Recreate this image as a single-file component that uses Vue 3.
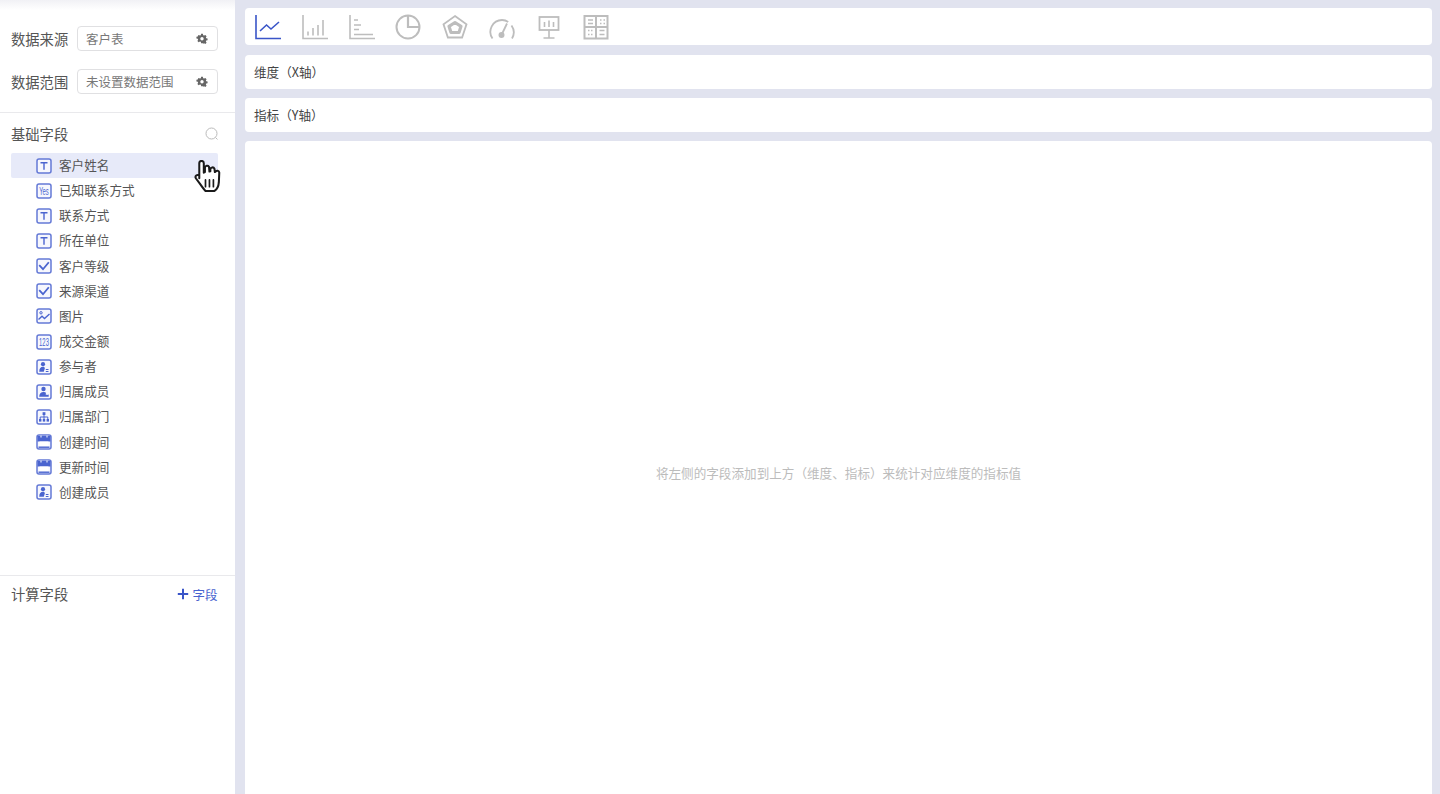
<script setup>
const fields = [
  { name: '客户姓名', icon: 'text', active: true },
  { name: '已知联系方式', icon: 'yes' },
  { name: '联系方式', icon: 'text' },
  { name: '所在单位', icon: 'text' },
  { name: '客户等级', icon: 'check' },
  { name: '来源渠道', icon: 'check' },
  { name: '图片', icon: 'image' },
  { name: '成交金额', icon: 'number' },
  { name: '参与者', icon: 'person' },
  { name: '归属成员', icon: 'member' },
  { name: '归属部门', icon: 'dept' },
  { name: '创建时间', icon: 'date' },
  { name: '更新时间', icon: 'date' },
  { name: '创建成员', icon: 'person' }
]
</script>

<template>
  <div class="page">
    <aside class="side">
      <div class="source">
        <div class="source-row">
          <span class="label">数据来源</span>
          <div class="select">
            <span>客户表</span>
            <svg class="gear" viewBox="0 0 12 12"><path d="M5 .8h2l.3 1.500 1 .5L9.700 2l1.400 1.400-.8 1.400.4 1 1.500.3v1.900l-1.500.3-.4 1 .8 1.400-1.400 1.400-1.400-.8-1 .4L7 11.200H5l-.3-1.500-1-.4-1.400.8L.9 8.700l.8-1.400-.4-1L-.2 6V4.100l1.500-.3.400-1L.9 3.400 2.300 2l1.400.8 1-.5z" transform="translate(.6 .1) scale(.9)" /><circle cx="6" cy="5.700" r="1.700" fill="#fff" /></svg>
          </div>
        </div>
        <div class="source-row">
          <span class="label">数据范围</span>
          <div class="select">
            <span>未设置数据范围</span>
            <svg class="gear" viewBox="0 0 12 12"><path d="M5 .8h2l.3 1.500 1 .5L9.700 2l1.400 1.400-.8 1.400.4 1 1.500.3v1.900l-1.500.3-.4 1 .8 1.400-1.400 1.400-1.400-.8-1 .4L7 11.200H5l-.3-1.500-1-.4-1.400.8L.9 8.700l.8-1.400-.4-1L-.2 6V4.100l1.500-.3.400-1L.9 3.400 2.300 2l1.400.8 1-.5z" transform="translate(.6 .1) scale(.9)" /><circle cx="6" cy="5.700" r="1.700" fill="#fff" /></svg>
          </div>
        </div>
      </div>

      <div class="base">
        <div class="section-head">
          <span class="label">基础字段</span>
          <svg class="search" viewBox="0 0 14 14"><circle cx="6.500" cy="6.500" r="5.500" /><path d="M10.500 10.500l2 2" /></svg>
        </div>
        <ul class="field-list">
          <li v-for="f in fields" :key="f.name" class="field" :class="{ active: f.active }">
            <svg class="field-icon" viewBox="0 0 16 16">
              <rect x="1" y="1" width="14" height="14" rx="2" class="box" />
              <template v-if="f.icon === 'text'">
                <path d="M4.500 4.700h7M8 4.700v7" class="line" />
              </template>
              <template v-else-if="f.icon === 'yes'">
                <text x="0" y="0" text-anchor="middle" class="tiny" transform="translate(8 12) scale(.56 1)">Yes</text>
              </template>
              <template v-else-if="f.icon === 'check'">
                <path d="M3.200 7.200L7 11.200l5.800-7" class="line bold" />
              </template>
              <template v-else-if="f.icon === 'image'">
                <path d="M2.500 11.500L6 8.300l2.500 2.200 5-4.500" class="line" />
                <circle cx="5" cy="4.800" r="1.200" class="line thin" />
              </template>
              <template v-else-if="f.icon === 'number'">
                <text x="0" y="0" text-anchor="middle" class="tiny" transform="translate(8 12) scale(.56 1)">123</text>
              </template>
              <template v-else-if="f.icon === 'person'">
                <circle cx="7" cy="5.200" r="2.100" class="fill" />
                <path d="M3.200 12.800c0-3.200 1.500-5 3.800-5 1.200 0 1.800.6 1.800 1.600l-1 3.400z" class="fill" />
                <path d="M9.800 10.500h2.700M9.800 12.500h2.700" class="line thin" />
              </template>
              <template v-else-if="f.icon === 'member'">
                <circle cx="7.500" cy="5" r="2.200" class="fill" />
                <path d="M3.200 12.800c0-3 1.800-4.800 4.300-4.800 1 0 2 .3 2.600 1l-.6 1.300 1.500.8 1.700-.5v2.200z" class="fill" />
              </template>
              <template v-else-if="f.icon === 'dept'">
                <rect x="6.600" y="3.200" width="2.800" height="2.800" class="fill" />
                <rect x="3" y="10" width="2.400" height="2.600" class="fill" />
                <rect x="6.800" y="10" width="2.400" height="2.600" class="fill" />
                <rect x="10.600" y="10" width="2.400" height="2.600" class="fill" />
                <path d="M8 6v4M4.200 10V8h7.600v2" class="line thin" />
              </template>
              <template v-else-if="f.icon === 'date'">
                <rect x="1.500" y="2" width="13" height="5.500" class="fill" />
                <rect x="3.500" y="7.500" width="9" height="4.800" fill="#fff" />
                <path d="M2.500 13.200h11" class="line" />
                <path d="M5 1.500v2M11 1.500v2" stroke="#fff" stroke-width="1" />
              </template>
            </svg>
            <span>{{ f.name }}</span>
          </li>
        </ul>
      </div>

      <div class="calc">
        <span class="label">计算字段</span>
        <span class="add"><svg class="plus" viewBox="0 0 12 12"><path d="M6 .8v10.400M.8 6h10.400" /></svg>字段</span>
      </div>

      <!-- 鼠标手形 -->
      <svg class="cursor" viewBox="0 0 28 33">
        <g transform="translate(-1.500 -3) scale(1.130 1.120)">
          <path d="M6 19V5.500a2 2 0 0 1 4 0V14l1-.5V9.500a2 2 0 0 1 3.600-.8L15 13l.8-.2v-2a1.900 1.900 0 0 1 3.600-.4l.4 3 .5-.2a1.800 1.800 0 0 1 3.400.7l-.4 8.800c-.3 4-1.800 6.300-3.800 7.600H11.500c-1.500-1.500-3-3.600-5-6.500l-3.400-4.600c-1.400-2.300 1-4 2.900-2.700z" fill="#fff" stroke="#1a1a1a" stroke-width="1.800" stroke-linejoin="round" />
          <path d="M11.500 20.500v6M15 20.500v6M18.500 20.500v6" fill="none" stroke="#1a1a1a" stroke-width="1.500" stroke-linecap="round" />
        </g>
      </svg>
    </aside>

    <main class="main">
      <div class="panel types">
        <!-- 折线图 -->
        <svg class="chart" viewBox="0 0 26 26"><path d="M1 1v23.500h25" class="on" /><path d="M5 17l6.500-6 4.500 4 8-7" class="on" /></svg>
        <!-- 柱状图 -->
        <svg class="chart" viewBox="0 0 26 26"><path d="M1 1v23.500h25" /><path d="M6 17.500v4M11 14v7.500M16 11v10.500M21 6v15.500" /></svg>
        <!-- 条形图 -->
        <svg class="chart" viewBox="0 0 26 26"><path d="M1 1v23.500h25" /><path d="M5 6h4M5 11h7M5 15.500h5M5 20.500h19" /></svg>
        <!-- 饼图 -->
        <svg class="chart" viewBox="0 0 26 26"><circle cx="13" cy="13" r="11.500" stroke-width="2" /><path d="M13 1.500V13h11.500" stroke-width="2.200" /></svg>
        <!-- 雷达图 -->
        <svg class="chart" viewBox="0 0 26 26"><path d="M13 2l11.500 8.300-4.400 13.200H5.900L1.500 10.300z" stroke-width="1.800" /><path d="M13 8.500l6 3.800-2 6.200H9l-2-6.200z" stroke-width="3.200" stroke-linejoin="round" /></svg>
        <!-- 仪表盘 -->
        <svg class="chart" viewBox="0 0 26 26"><path d="M3.500 24.500A11.800 11.800 0 0 1 13 6c2.500 0 4.500.7 6.200 1.900M22.500 11.500a12 12 0 0 1 .5 13" stroke-width="1.800" /><path d="M12.500 21l5.500-11.500" stroke-width="1.800" /><circle cx="12.500" cy="21" r="2.200" fill="#bdbdbd" /></svg>
        <!-- 指标卡 -->
        <svg class="chart" viewBox="0 0 26 26"><rect x="3.500" y="3" width="19" height="13" stroke-width="1.800" /><path d="M13 16v7.500M7.500 24h11M8.500 8v5M13 6.500V13M17.500 8v5" /></svg>
        <!-- 透视表 -->
        <svg class="chart" viewBox="0 0 26 26"><rect x="1.500" y="2" width="23" height="22.500" stroke-width="2" /><path d="M13 2v22.500M1.500 13h23" stroke-width="2" /><path d="M5 6h5M5 9.500h5M17 6h1.500M17 9.500h1.500M20.500 6H22M20.500 9.500H22M5 16.500h1.500M5 20.500h1.500M8 16.500h1.500M8 20.500h1.500M16.500 16.500h5M16.500 20.500h5" /></svg>
      </div>
      <div class="panel axis">维度（X轴）</div>
      <div class="panel axis">指标（Y轴）</div>
      <div class="panel canvas">将左侧的字段添加到上方（维度、指标）来统计对应维度的指标值</div>
    </main>
  </div>
</template>

<style scoped>
.page {
  display: flex;
  height: 794px;
  overflow: hidden;
  background: #e1e3ef;
  font-family: "Noto Sans CJK SC", "Liberation Sans", sans-serif;
  color: #555;
}

.side {
  position: relative;
  width: 235px;
  flex: none;
  display: flex;
  flex-direction: column;
  background: #fff;
}

.source {
  height: 113px;
  flex: none;
  padding: 26px 17.500px 0 11px;
  box-sizing: border-box;
  border-bottom: 1px solid #e9e9ec;
  background: linear-gradient(#f1f1f5, #fff 10px);
}

.source-row {
  display: flex;
  align-items: center;
  justify-content: space-between;
  height: 25px;
  margin-bottom: 18px;
}

.label {
  font-size: 14.3px;
  line-height: 20px;
  color: #555;
}

.select {
  width: 140.500px;
  height: 25px;
  box-sizing: border-box;
  border: 1px solid #e0e0e2;
  border-radius: 4px;
  padding: 0 9px 0 8px;
  display: flex;
  align-items: center;
  justify-content: space-between;
  font-size: 12.5px;
  color: #777;
}

.gear {
  width: 12px;
  height: 12px;
  fill: #666;
}

.base {
  height: 463px;
  flex: none;
  padding: 0 17.500px 0 11px;
  box-sizing: border-box;
  border-bottom: 1px solid #e9e9ec;
}

.section-head {
  height: 40px;
  padding-top: 1px;
  box-sizing: border-box;
  display: flex;
  align-items: center;
  justify-content: space-between;
}

.search {
  width: 14px;
  height: 14px;
  margin-top: 1px;
  margin-right: -1px;
  fill: none;
  stroke: #bbb;
  stroke-width: 1;
}

.field-list {
  list-style: none;
  margin: 0;
  padding: 0;
}

.field {
  height: 25.150px;
  display: flex;
  align-items: center;
  gap: 7px;
  padding-left: 25px;
  font-size: 12.600px;
  line-height: 16px;
  color: #555;
}

.field span {
  margin-top: -1px;
}

.field.active {
  background: #e7eaf9;
  border-radius: 2px;
}

.field-icon {
  width: 16px;
  height: 16px;
  flex: none;
}

.box {
  fill: #f6f7fd;
  stroke: #6479d6;
  stroke-width: 1.500;
}

.line {
  fill: none;
  stroke: #4a64cf;
  stroke-width: 1.400;
}

.line.thin {
  stroke-width: 1;
}

.line.bold {
  stroke-width: 1.800;
}

.fill {
  fill: #4a64cf;
}

.tiny {
  font-size: 10.500px;
  font-family: "Liberation Sans", sans-serif;
  fill: #4a64cf;
}

.calc {
  display: flex;
  align-items: center;
  justify-content: space-between;
  height: 36px;
  padding: 0 17.500px 0 11px;
}

.add {
  display: flex;
  align-items: center;
  gap: 3px;
  font-size: 12.500px;
  color: #4a64cf;
}

.plus {
  width: 12px;
  height: 12px;
  fill: none;
  stroke: #3a55c8;
  stroke-width: 2;
}

.cursor {
  position: absolute;
  left: 194px;
  top: 160px;
  width: 28px;
  height: 33px;
}

.main {
  flex: 1;
  min-width: 0;
  padding: 8px 8px 0 10px;
  display: flex;
  flex-direction: column;
  gap: 9px;
}

.panel {
  background: #fff;
  border-radius: 4px;
  flex: none;
}

.types {
  height: 37px;
  display: flex;
  align-items: center;
  gap: 20.800px;
  padding-left: 10px;
  margin-bottom: 1px;
}

.chart {
  width: 26px;
  height: 26px;
  flex: none;
  fill: none;
  stroke: #bdbdbd;
  stroke-width: 1.600;
}

.chart .on {
  stroke: #3a55c8;
}

.axis {
  height: 34px;
  line-height: 33px;
  padding-left: 9px;
  font-size: 12.600px;
  color: #444;
}

.canvas {
  flex: 1;
  display: flex;
  align-items: center;
  justify-content: center;
  font-size: 12.600px;
  color: #bcbcbc;
  border-radius: 4px 4px 0 0;
  padding-top: 9px;
}
</style>
